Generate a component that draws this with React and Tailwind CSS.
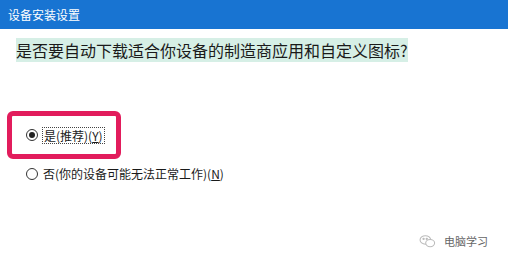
import React from 'react';

const font = { fontFamily: '"Microsoft YaHei", "Noto Sans CJK SC", "Liberation Sans", sans-serif' };

const Radio = ({ checked }) => (
  <span className="w-[12px] h-[12px] rounded-full border border-[#333] bg-white flex items-center justify-center shrink-0">
    {checked && <span className="w-[6px] h-[6px] rounded-full bg-[#222]" />}
  </span>
);

export default function App() {
  return (
    <div className="w-[508px] h-[263px] bg-white overflow-hidden flex flex-col" style={font}>
      {/* title bar */}
      <div className="h-[29px] bg-[#1874d2] flex items-center pl-[8px] shrink-0">
        <span className="text-white text-[12px] leading-none">设备安装设置</span>
      </div>

      <div className="pl-[16px] pt-[9px]">
        <span className="text-[16px] leading-[20px] text-[#1a1a1a] bg-[#d6efe6]">
          是否要自动下载适合你设备的制造商应用和自定义图标?
        </span>
      </div>

      <div className="pl-[7px] pt-[49px] flex flex-col">
        <div className="w-[114px] h-[48px] border-[5px] border-[#e21c5c] rounded-[6px] flex items-center pl-[14px] gap-[4px]">
          <Radio checked />
          <span className="text-[12px] leading-[15px] text-[#1a1a1a] border border-dotted border-[#444] px-[1px]">
            是(推荐)(<span className="underline">Y</span>)
          </span>
        </div>
        <div className="flex items-center pl-[19px] gap-[5px] mt-[7px]">
          <Radio />
          <span className="text-[12px] leading-[15px] text-[#1a1a1a]">
            否(你的设备可能无法正常工作)(<span className="underline">N</span>)
          </span>
        </div>
      </div>

      <div className="flex-1" />
      <div className="flex items-center justify-end pr-[20px] pb-[14px] gap-[8px]">
        <svg width="17" height="15" viewBox="0 0 16 14" fill="none" stroke="#bbb" strokeWidth="1">
          <ellipse cx="6" cy="5.5" rx="5" ry="4" />
          <ellipse cx="10.5" cy="8.5" rx="4.2" ry="3.4" fill="white" />
          <circle cx="4.3" cy="4.5" r="0.6" fill="#bbb" />
          <circle cx="7.3" cy="4.5" r="0.6" fill="#bbb" />
        </svg>
        <span className="text-[11px] text-[#666] leading-none">电脑学习</span>
      </div>
    </div>
  );
}
